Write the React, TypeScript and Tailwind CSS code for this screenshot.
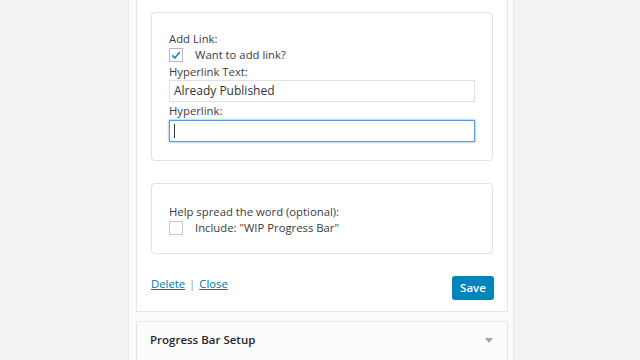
export default function App() {
  const font = { fontFamily: '"Open Sans", "Noto Sans", sans-serif' };

  return (
    <div className="w-[640px] h-[360px] overflow-hidden bg-[#f3f3f3]" style={font}>
      <div className="ml-[128px] w-[386px] h-full border-x border-[#e8e8e8] bg-[#fbfbfb] pl-[7px] pr-[5px]">
        {/* widget panel */}
        <div className="border-x border-b border-[#e5e5e5] bg-white px-[14px] pt-[12px] pb-[11px]">
          <div className="rounded-[4px] border border-[#e2e2e2] px-[17px] pt-[17px] pb-[18px] text-[11.3px] text-[#3c3c3c]">
            <div className="leading-[17px]">Add Link:</div>
            <label className="flex h-[16px] items-center">
              <span className="flex h-[14px] w-[14px] items-center justify-center border border-[#b4b9be] bg-white">
                <svg viewBox="0 0 16 16" className="h-[12px] w-[12px]">
                  <path d="M3 8.5 L6.5 12 L13 4" fill="none" stroke="#1e8cbe" strokeWidth="2.4" />
                </svg>
              </span>
              <span className="ml-[12px]">Want to add link?</span>
            </label>
            <div className="leading-[17px]">Hyperlink Text:</div>
            <div className="flex h-[22px] items-center border border-[#e0e0e0] px-[4px] text-[12px] text-[#333]">
              Already Published
            </div>
            <div className="leading-[17px]">Hyperlink:</div>
            <div className="mt-px flex h-[22px] items-center border border-[#5b9dd9] px-[4px] shadow-[0_0_2px_rgba(30,140,190,0.8)]">
              <span className="h-[14px] w-px bg-[#333]" />
            </div>
          </div>

          <div className="mt-[22px] rounded-[4px] border border-[#e2e2e2] px-[17px] pt-[19px] pb-[17px] text-[11.3px] text-[#3c3c3c]">
            <div className="leading-[17px]">Help spread the word (optional):</div>
            <label className="flex h-[16px] items-center">
              <span className="h-[14px] w-[14px] border border-[#c4c8cb] bg-white" />
              <span className="ml-[12px]">Include: "WIP Progress Bar"</span>
            </label>
          </div>

          <div className="mt-[22px] flex items-start justify-between">
            <div className="text-[11.3px] leading-[16px]">
              <a className="text-[#0073aa] underline">Delete</a>
              <span className="mx-[4px] text-[#999]">|</span>
              <a className="text-[#0073aa] underline">Close</a>
            </div>
            <button className="mr-[-1px] h-[24px] w-[42px] rounded-[3px] bg-[#0085ba] text-[11.5px] font-semibold text-white">
              Save
            </button>
          </div>
        </div>

        {/* next widget */}
        <div className="mt-[9px] flex h-[60px] items-start justify-between border border-[#e5e5e5] bg-[#fcfcfc] pl-[13px] pr-[14px] pt-[9px]">
          <div className="text-[11.5px] font-semibold leading-[18px] text-[#23282d]">Progress Bar Setup</div>
          <svg viewBox="0 0 10 6" className="mt-[7px] h-[5px] w-[8px]">
            <path d="M0 0 L10 0 L5 6 Z" fill="#a0a5aa" />
          </svg>
        </div>
      </div>
    </div>
  );
}
